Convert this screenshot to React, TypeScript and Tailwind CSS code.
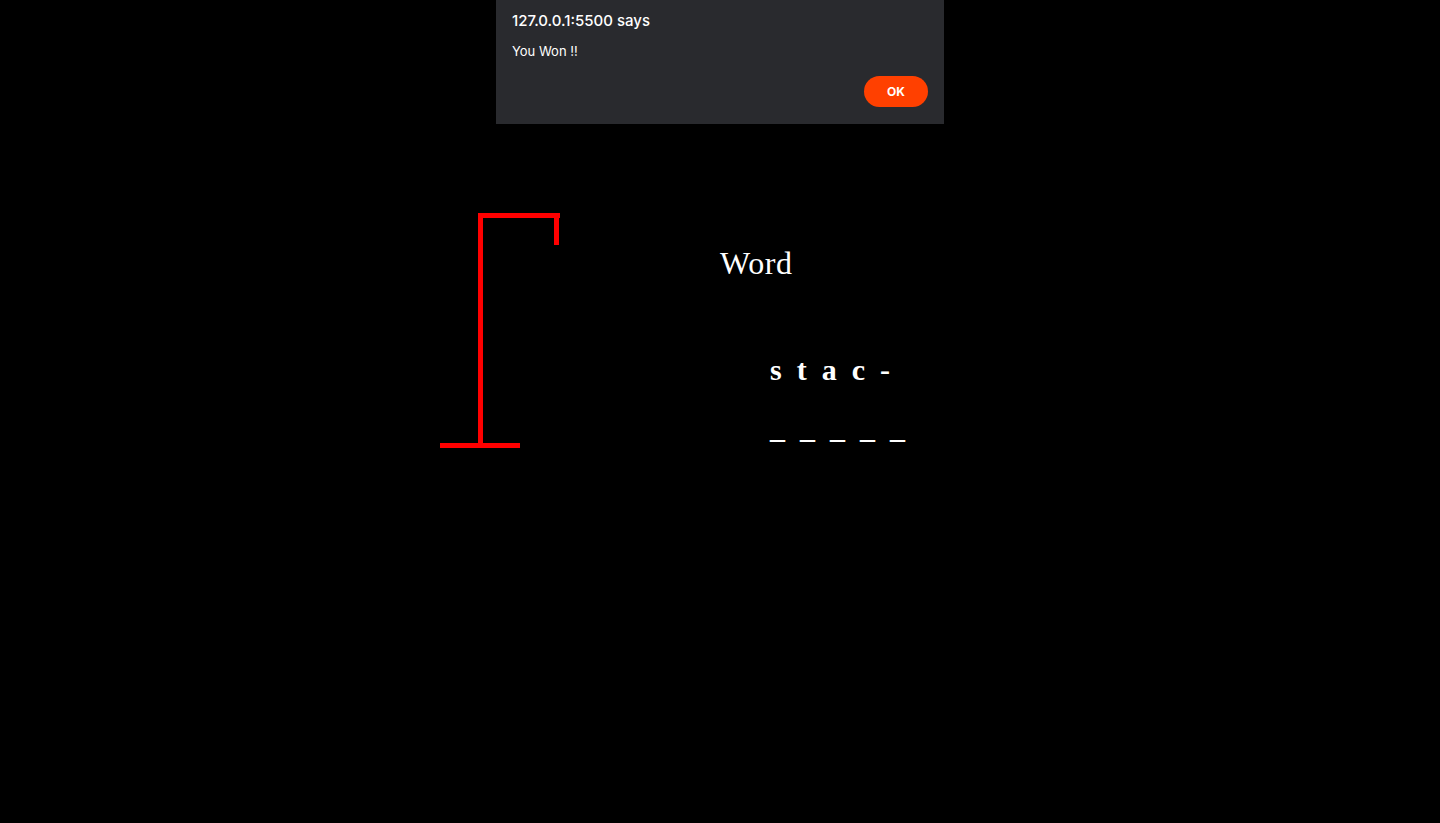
import React from "react";

export default function App() {
  const guessed = ["s", "t", "a", "c", "-"];
  const blanks = ["_", "_", "_", "_", "_"];
  return (
    <div className="relative min-h-screen w-full bg-black overflow-hidden" style={{ minHeight: 823 }}>
      <div className="flex pl-[440px] pt-[213px]">
        <svg width="120" height="236" viewBox="0 0 120 236" className="block shrink-0">
          <g fill="#ff0000">
            <rect x="38" y="0" width="5" height="233" />
            <rect x="38" y="0" width="82" height="5" />
            <rect x="114" y="0" width="5" height="32" />
            <rect x="0" y="230" width="80" height="5" />
          </g>
        </svg>
        <div className="ml-[160px] flex flex-col text-white" style={{ fontFamily: '"Liberation Serif", "Times New Roman", serif' }}>
          <div className="mt-[34px] text-[32px] leading-[32px] tracking-[0.6px]">Word</div>
          <div className="mt-[76px] ml-[50px] flex gap-[15px] text-[30px] leading-[30px] font-bold">
            {guessed.map((l, i) => (
              <span key={i}>{l}</span>
            ))}
          </div>
          <div className="mt-[28px] ml-[50px] flex gap-[15px] text-[30px] leading-[30px] font-bold">
            {blanks.map((l, i) => (
              <span key={i}>{l}</span>
            ))}
          </div>
        </div>
      </div>

      <div
        className="absolute left-[496px] top-0 w-[448px] h-[124px] bg-[#292a2e] text-white px-4"
        style={{ fontFamily: 'Inter, "Liberation Sans", Arial, sans-serif' }}
      >
        <div className="pt-[11px] text-[15px] leading-[20px] font-medium">127.0.0.1:5500 says</div>
        <div className="mt-[12px] text-[13px] leading-[16px]">You Won !!</div>
        <div className="flex justify-end mt-[17px]">
          <button className="w-[64px] h-[31px] rounded-full bg-[#ff4000] text-white text-[12px] font-bold leading-none">
            OK
          </button>
        </div>
      </div>
    </div>
  );
}
